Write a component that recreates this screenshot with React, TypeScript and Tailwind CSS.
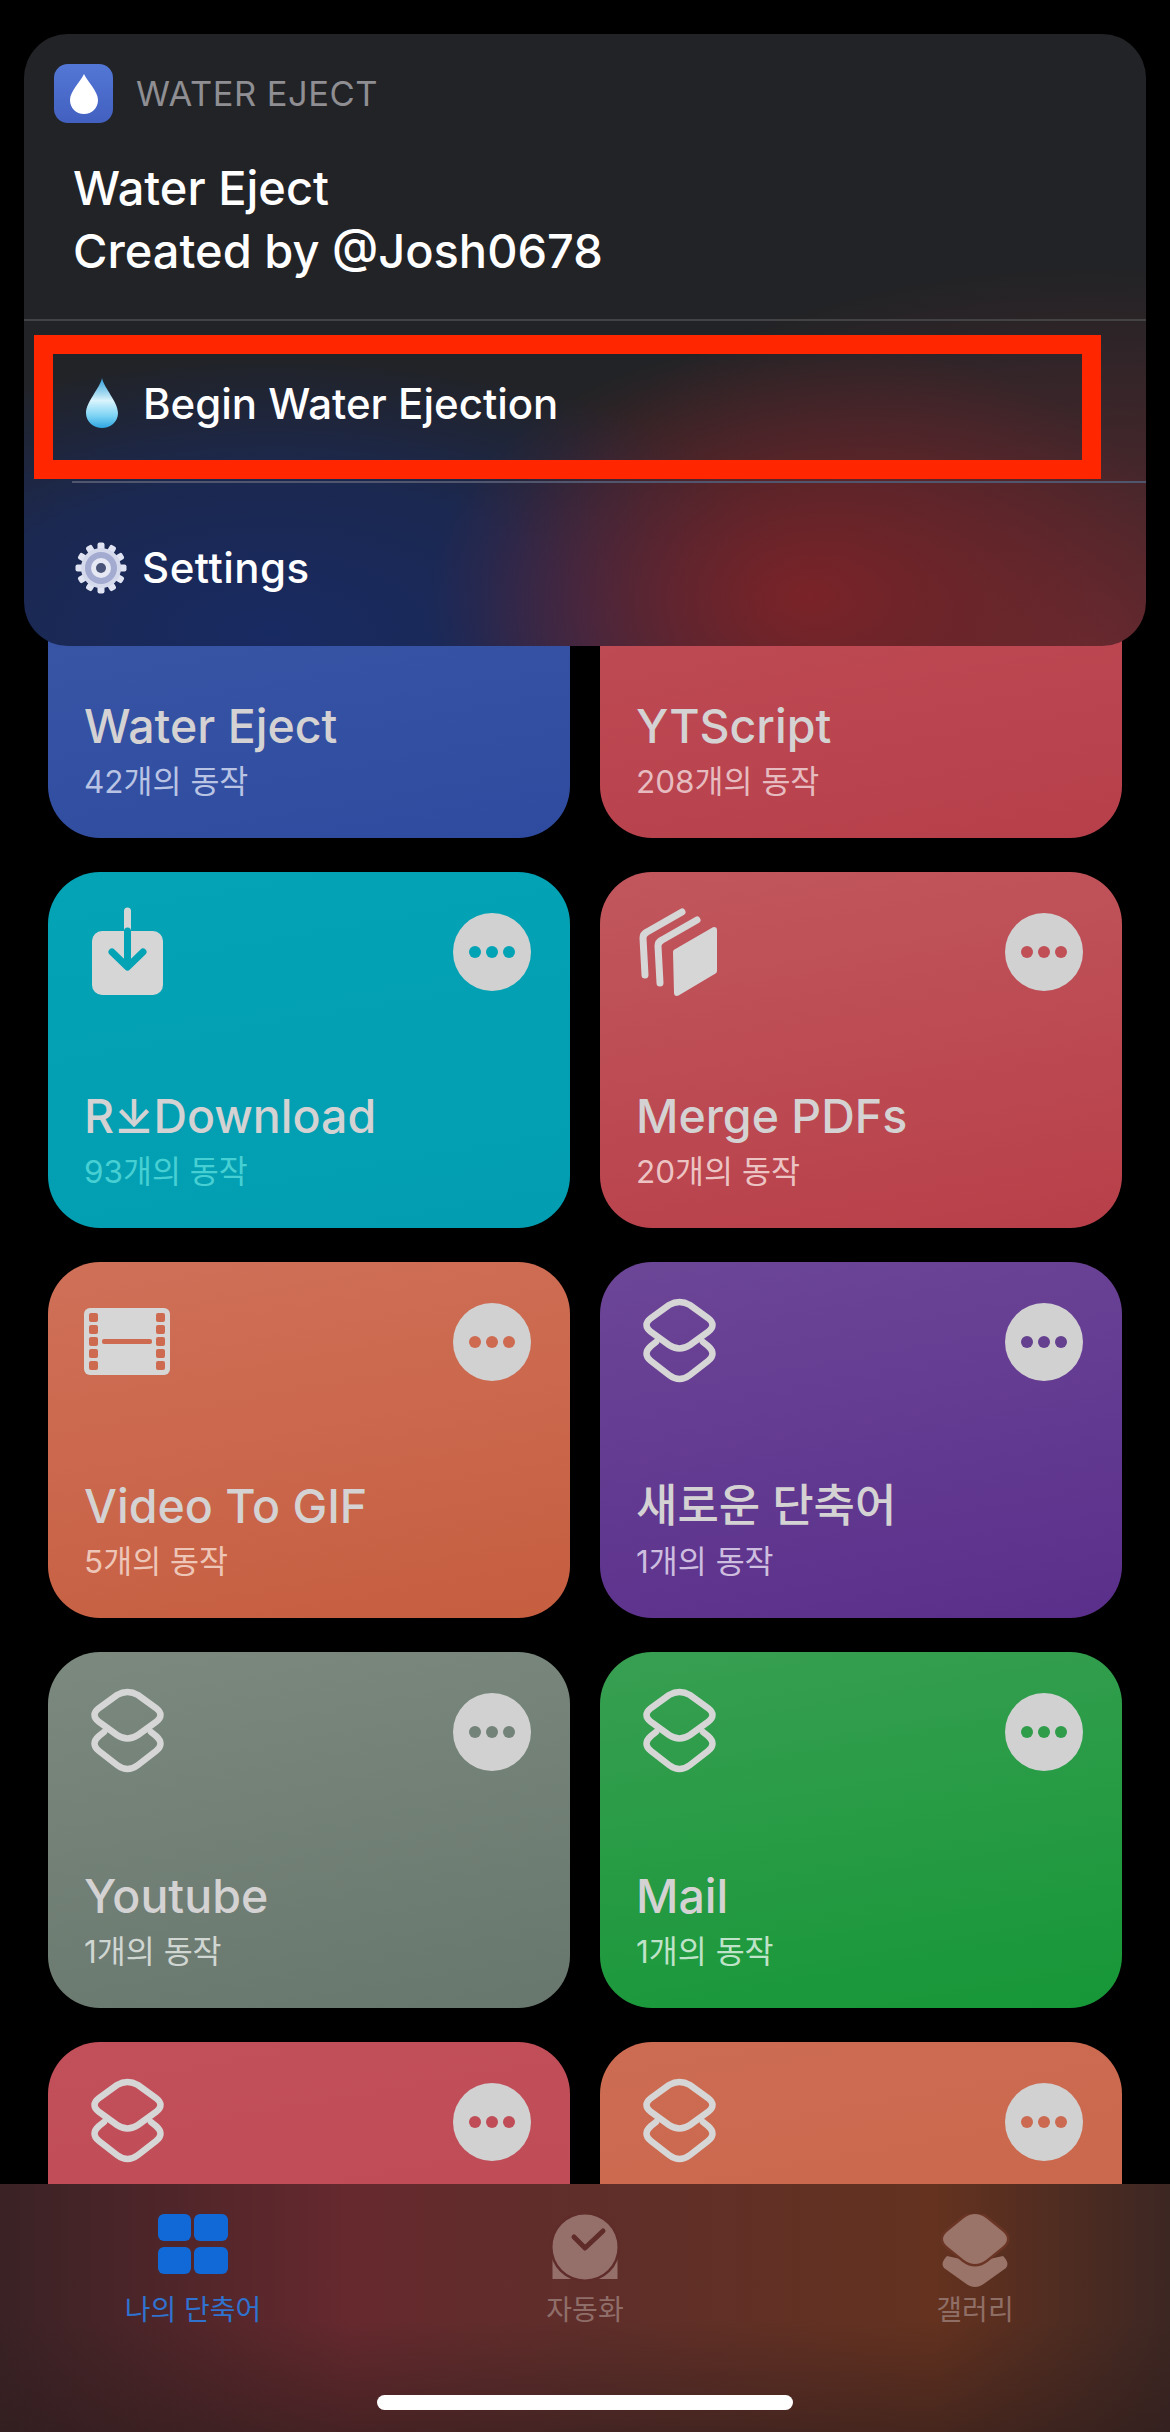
import { ReactNode } from 'react';

const ICON_STROKE = '#d6d6d6';

function StackIcon() {
  return (
    <svg width="90" height="96" viewBox="0 0 90 96" fill="none" stroke={ICON_STROKE} strokeWidth="6.5" strokeLinecap="round">
      <path d="M33 9Q43.500 3 54 9L72 22Q81 29 72 36L54 49Q43.500 56 33 49L15 36Q6 29 15 22Z" />
      <path d="M20 46L15 50Q6 58 15 65L33 79Q43.500 87 54 79L72 65Q81 58 72 50L67 46" />
    </svg>
  );
}

function DownloadIcon() {
  return (
    <svg width="90" height="96" viewBox="0 0 90 96" fill="none" strokeLinecap="round" strokeLinejoin="round">
      <rect x="8" y="25" width="71" height="64" rx="10" fill={ICON_STROKE} />
      <path d="M43.500 5V25" stroke={ICON_STROKE} strokeWidth="7" />
      <path d="M43.500 25V60M28 46L43.500 61L59 46" stroke="#03a3b6" strokeWidth="7" />
    </svg>
  );
}

function PagesIcon() {
  return (
    <svg width="90" height="96" viewBox="0 0 90 96" fill="none" stroke={ICON_STROKE} strokeLinecap="round" strokeLinejoin="round">
      <path d="M78 24L40 46L41 87L78 65Z" fill={ICON_STROKE} strokeWidth="6" />
      <path d="M46 6L11 26Q7 28 7 32L9 69" strokeWidth="7" />
      <path d="M61 14L26 34Q22 36 22 40L24 77" strokeWidth="7" />
    </svg>
  );
}

function FilmIcon() {
  return (
    <svg width="90" height="96" viewBox="0 0 90 96">
      <rect x="0" y="12" width="86" height="67" rx="6" fill={ICON_STROKE} />
      {[17, 29, 41, 53, 65].map((y) => (
        <g key={y} fill="#cd6a50">
          <rect x="5" y={y} width="9" height="9" rx="2" />
          <rect x="72" y={y} width="9" height="9" rx="2" />
        </g>
      ))}
      <rect x="18" y="43" width="50" height="5" rx="2" fill="#cd6a50" />
    </svg>
  );
}

function WaterDrop() {
  return (
    <svg width="32" height="50" viewBox="0 0 32 50">
      <defs>
        <linearGradient id="dropFill" x1="0" y1="0" x2="0" y2="1">
          <stop offset="0" stopColor="#2f9ed8" />
          <stop offset="0.45" stopColor="#d9f4fc" />
          <stop offset="0.75" stopColor="#7fd4f5" />
          <stop offset="1" stopColor="#2ea6e0" />
        </linearGradient>
      </defs>
      <path d="M16 0C18 10 32 24 32 35C32 44 24 50 16 50C8 50 0 44 0 35C0 24 14 10 16 0Z" fill="url(#dropFill)" />
    </svg>
  );
}

function GearEmoji() {
  const teeth = [0, 30, 60, 90, 120, 150, 180, 210, 240, 270, 300, 330];
  return (
    <svg width="52" height="52" viewBox="0 0 52 52">
      <g fill="#dfe3f2">
        {teeth.map((deg) => (
          <rect key={deg} x="22.500" y="0.500" width="7" height="10" rx="2" transform={`rotate(${deg} 26 26)`} />
        ))}
      </g>
      <circle cx="26" cy="26" r="20" fill="#d5d9ec" />
      <circle cx="26" cy="26" r="16" fill="#a3abd0" />
      <circle cx="26" cy="26" r="10" fill="#e6e8f4" />
      <circle cx="26" cy="26" r="5" fill="#4a5478" />
    </svg>
  );
}

function MoreButton({ dot }: { dot: string }) {
  return (
    <div className="w-[78px] h-[78px] rounded-full bg-[#d1d1d1] flex items-center justify-center gap-[5px]">
      <span className={`w-[12px] h-[12px] rounded-full ${dot}`} />
      <span className={`w-[12px] h-[12px] rounded-full ${dot}`} />
      <span className={`w-[12px] h-[12px] rounded-full ${dot}`} />
    </div>
  );
}

interface Shortcut {
  title: string;
  count: string;
  bg: string;
  dot: string;
  sub: string;
  titleFont?: string;
  icon: ReactNode;
}

const shortcuts: Shortcut[] = [
  { title: 'Water Eject', count: '42개의 동작', bg: 'bg-[linear-gradient(170deg,#3c59a8,#2f4b9f)]', dot: 'bg-[#34509f]', sub: 'text-[#b9c4e4]', icon: <StackIcon /> },
  { title: 'YTScript', count: '208개의 동작', bg: 'bg-[linear-gradient(170deg,#c2505a,#b63f4a)]', dot: 'bg-[#bd4a54]', sub: 'text-[#e6bcc0]', icon: <StackIcon /> },
  { title: 'R⤓Download', count: '93개의 동작', bg: 'bg-[linear-gradient(170deg,#04a3b6,#029db0)]', dot: 'bg-[#03a3b6]', sub: 'text-[#46d0d4]', icon: <DownloadIcon /> },
  { title: 'Merge PDFs', count: '20개의 동작', bg: 'bg-[linear-gradient(170deg,#c1575d,#b83f49)]', dot: 'bg-[#c04f56]', sub: 'text-[#ecc4c4]', icon: <PagesIcon /> },
  { title: 'Video To GIF', count: '5개의 동작', bg: 'bg-[linear-gradient(170deg,#cf7058,#c65e40)]', dot: 'bg-[#cd6a50]', sub: 'text-[#eec6b8]', icon: <FilmIcon /> },
  { title: '새로운 단축어', count: '1개의 동작', bg: 'bg-[linear-gradient(170deg,#6c4697,#5a2f8b)]', dot: 'bg-[#64408f]', sub: 'text-[#cdbedf]', titleFont: 'font-medium text-[45px]', icon: <StackIcon /> },
  { title: 'Youtube', count: '1개의 동작', bg: 'bg-[linear-gradient(170deg,#7b897f,#68776d)]', dot: 'bg-[#74837a]', sub: 'text-[#d0d6d2]', icon: <StackIcon /> },
  { title: 'Mail', count: '1개의 동작', bg: 'bg-[linear-gradient(170deg,#389f52,#169737)]', dot: 'bg-[#2f9c4a]', sub: 'text-[#bfe3c8]', icon: <StackIcon /> },
  { title: '', count: '', bg: 'bg-[linear-gradient(170deg,#c2505a,#bc4852)]', dot: 'bg-[#bf4c56]', sub: 'text-[#e6bcc0]', icon: <StackIcon /> },
  { title: '', count: '', bg: 'bg-[linear-gradient(170deg,#cc6c52,#c9654a)]', dot: 'bg-[#cb6a50]', sub: 'text-[#eec6b8]', icon: <StackIcon /> },
];

function ShortcutCard({ item }: { item: Shortcut }) {
  return (
    <div className={`h-[356px] rounded-[52px] flex flex-col justify-between pl-[36px] pr-[39px] pt-[34px] pb-[34px] ${item.bg}`}>
      <div className="flex items-start justify-between">
        {item.icon}
        <div className="mt-[7px]">
          <MoreButton dot={item.dot} />
        </div>
      </div>
      <div>
        <div className={`leading-[60px] text-[#d4d2d2] ${item.titleFont ?? 'text-[46.500px] font-[550]'}`}>{item.title}</div>
        <div className={`text-[31.500px] leading-[44px] mt-[4px] ${item.sub}`}>{item.count}</div>
      </div>
    </div>
  );
}

function TabBar() {
  return (
    <div className="absolute left-0 bottom-0 w-full h-[248px] bg-[linear-gradient(180deg,rgba(45,28,28,0)_55%,rgba(45,28,28,0.55)),linear-gradient(90deg,#3a2225,#66292e_30%,#5f2e2a_50%,#64321f_80%,#3d2723)] pt-[30px]">
      <div className="grid grid-cols-3">
        <div className="flex flex-col items-center -ml-[4px]">
          <svg width="72" height="76" viewBox="0 0 72 76" fill="#1169d8">
            <rect x="1" y="0" width="33" height="27" rx="6" />
            <rect x="37" y="0" width="34" height="27" rx="6" />
            <rect x="1" y="33" width="33" height="27" rx="6" />
            <rect x="37" y="33" width="34" height="27" rx="6" />
          </svg>
          <span className="text-[28px] leading-[40px] text-[#2f72cf]">나의 단축어</span>
        </div>
        <div className="flex flex-col items-center">
          <svg width="72" height="76" viewBox="0 0 72 76">
            <path d="M3.500 42H68.500V65H3.500Z" fill="#95706a" />
            <circle cx="36" cy="33" r="35" fill="#5f2c2a" />
            <circle cx="36" cy="33" r="32.500" fill="#95706a" />
            <path d="M25 23L36 34L54 17" fill="none" stroke="#5f2c2a" strokeWidth="5" strokeLinecap="round" strokeLinejoin="round" />
          </svg>
          <span className="text-[28px] leading-[40px] text-[#8f6e69]">자동화</span>
        </div>
        <div className="flex flex-col items-center">
          <svg width="72" height="76" viewBox="0 0 72 76" fill="#9a7468">
            <path d="M26 46Q36 40 46 46L64 42Q71 49 67 54L46 69Q36 77 26 69L5 54Q1 49 8 42Z" />
            <path d="M25 4Q36 -4 47 4L63 17Q73 25 63 33L47 46Q36 54 25 46L9 33Q-1 25 9 17Z" stroke="#6b3526" strokeWidth="5" paintOrder="stroke" />
          </svg>
          <span className="text-[28px] leading-[40px] text-[#8f6e66]">갤러리</span>
        </div>
      </div>
      <div className="absolute left-[377px] top-[211px] w-[416px] h-[15px] rounded-full bg-white" />
    </div>
  );
}

function ActionSheet() {
  return (
    <div className="absolute left-[24px] top-[34px] w-[1122px] h-[612px] rounded-[44px] overflow-hidden bg-[#222326] bg-[image:radial-gradient(ellipse_34%_42%_at_70%_92%,rgba(125,35,40,0.95),rgba(125,35,40,0)),radial-gradient(ellipse_55%_62%_at_95%_100%,rgba(105,42,48,0.9),rgba(105,42,48,0)),radial-gradient(ellipse_50%_46%_at_22%_98%,rgba(24,42,98,1),rgba(24,42,98,0.7)_55%,rgba(24,42,98,0))]">
      <div className="h-[287px] border-b-2 border-[#434345]">
        <div className="flex items-center gap-[23px] pl-[30px] pt-[30px]">
          <div className="w-[59px] h-[59px] rounded-[14px] bg-[linear-gradient(180deg,#5377d6,#4260c0)] flex items-center justify-center">
            <svg width="28" height="40" viewBox="0 0 28 40" fill="#fff">
              <path d="M14 0C17 7 28 17 28 26C28 34 22 40 14 40C6 40 0 34 0 26C0 17 11 7 14 0Z" />
            </svg>
          </div>
          <span className="text-[34.500px] tracking-[0.500px] text-[#8e8e93]">WATER EJECT</span>
        </div>
        <div className="pl-[49px] mt-[33px] text-[47px] leading-[63px] font-medium text-white">
          <div>Water Eject</div>
          <div>Created by @Josh0678</div>
        </div>
      </div>
      <div className="h-[160px] flex items-center pl-[62px] gap-[25px] pt-[4px]">
        <WaterDrop />
        <span className="text-[42px] font-medium text-white">Begin Water Ejection</span>
      </div>
      <div className="h-[2px] ml-[48px] bg-[#50566e]" />
      <div className="h-[163px] flex items-center pl-[51px] gap-[15px] pt-[6px]">
        <GearEmoji />
        <span className="text-[42px] tracking-[0.500px] font-medium text-white">Settings</span>
      </div>
    </div>
  );
}

export default function App() {
  return (
    <div className="relative w-[1170px] h-[2432px] overflow-hidden bg-black font-[Inter,'Noto_Sans_CJK_KR',sans-serif]">
      <div className="grid grid-cols-2 gap-x-[30px] gap-y-[34px] px-[48px] pt-[482px]">
        {shortcuts.map((item, i) => (
          <ShortcutCard key={i} item={item} />
        ))}
      </div>
      <ActionSheet />
      {/* 빨간 강조 박스 */}
      <div className="absolute left-[34px] top-[335px] w-[1067px] h-[144px] border-[19px] border-[#ff2600]" />
      <TabBar />
    </div>
  );
}
